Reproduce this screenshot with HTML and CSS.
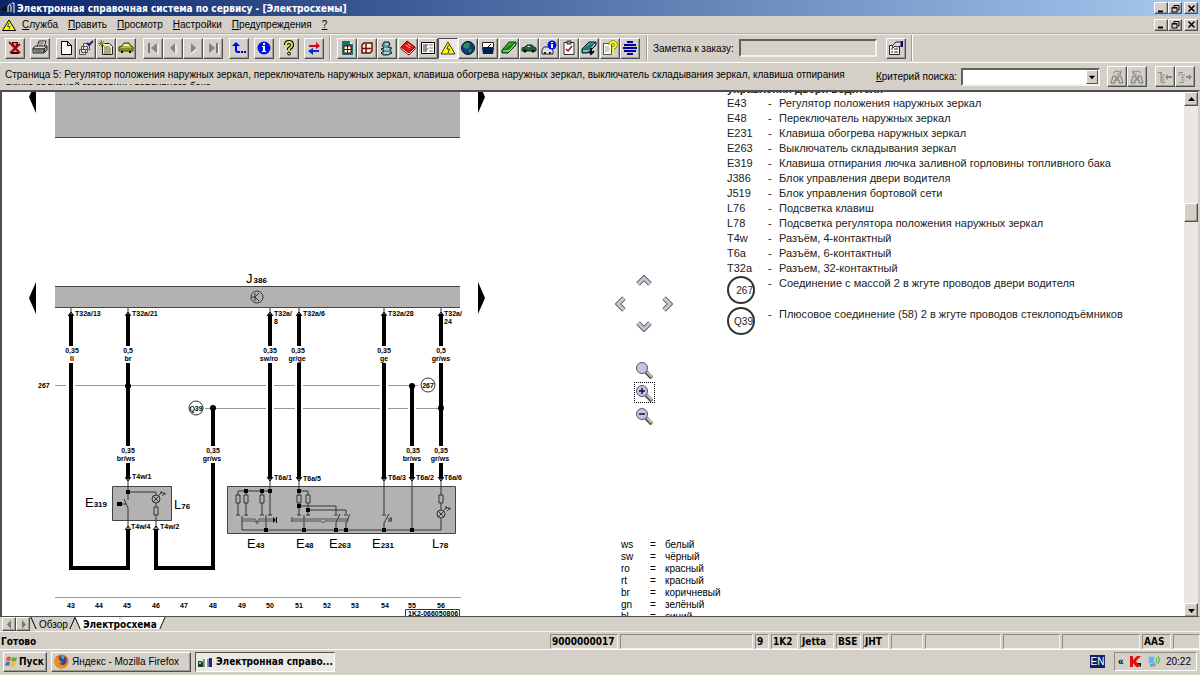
FILE: index.html
```html
<!DOCTYPE html>
<html lang="ru">
<head>
    <meta charset="UTF-8">
    <meta name="viewport" content="width=device-width, initial-scale=1.0">
    <title>Электронная справочная система по сервису - [Электросхемы]</title>
    <link rel="stylesheet" href="styles.css">
</head>
<body>
    <header class="titlebar">
        <svg class="app-icon" width="14" height="12" viewBox="0 0 14 12"><path d="M0 7l3-3h3v5H0z" fill="#111"/><path d="M6 10V4q2-3 3 0v6M10 1h2v10" fill="none" stroke="#fff"/><path d="M7 2h3" stroke="#7ab"/></svg>
        <h1>Электронная справочная система по сервису - [Электросхемы]</h1>
        <div class="win-buttons">
            <button aria-label="Свернуть"><svg width="9" height="9" viewBox="0 0 9 9"><path d="M1 7.500h5" stroke="#000" stroke-width="2"/></svg></button>
            <button aria-label="Восстановить"><svg width="9" height="9" viewBox="0 0 9 9"><path d="M3 3V1.500h5V6H6.500M1 3.500h5V8H1zM1 4h5M3 1.500h5" fill="none" stroke="#000"/></svg></button>
            <button class="win-close" aria-label="Закрыть"><svg width="9" height="9" viewBox="0 0 9 9"><path d="M1.500 1.500l6 6M7.500 1.500l-6 6" stroke="#000" stroke-width="1.500"/></svg></button>
        </div>
    </header>

    <nav class="menubar">
        <svg class="app-icon" width="14" height="12" viewBox="0 0 14 12"><path d="M7 1l6.500 10.500H.5z" fill="#ff0" stroke="#000"/><path d="M7 4L5.500 7.500h2.500L7 10.500" fill="none" stroke="#443"/></svg>
        <button><u>С</u>лужба</button>
        <button><u>П</u>равить</button>
        <button><u>П</u>росмотр</button>
        <button><u>Н</u>астройки</button>
        <button><u>П</u>редупреждения</button>
        <button><u>?</u></button>
        <div class="win-buttons">
            <button aria-label="Свернуть окно"><svg width="9" height="9" viewBox="0 0 9 9"><path d="M1 7.500h5" stroke="#000" stroke-width="2"/></svg></button>
            <button aria-label="Восстановить окно"><svg width="9" height="9" viewBox="0 0 9 9"><path d="M3 3V1.500h5V6H6.500M1 3.500h5V8H1zM1 4h5M3 1.500h5" fill="none" stroke="#000"/></svg></button>
            <button class="win-close" aria-label="Закрыть окно"><svg width="9" height="9" viewBox="0 0 9 9"><path d="M1.500 1.500l6 6M7.500 1.500l-6 6" stroke="#000" stroke-width="1.500"/></svg></button>
        </div>
    </nav>

    <div class="toolbar">
        <button class="tool" aria-label="Выход"><svg viewBox="0 0 16 16"><path d="M5 2h6v3L9 8l3 3v3H4v-3l3-3-2-3z" fill="#400"/><path d="M6 3h4l-2 4zM6 12l2-3 3 3z" fill="#d88"/><path d="M2 2l11 11M13 4L3 13" stroke="#b00010" stroke-width="2"/></svg></button>
        <button class="tool" aria-label="Печать"><svg viewBox="0 0 16 16"><path d="M5 7l2-6h7l-2 6" fill="#fff" stroke="#222"/><path d="M1 8l3-2h11l-3 3H1z" fill="#ddd" stroke="#222"/><path d="M1 9h11v4H1zM12 13l3-3V6l-3 3z" fill="#aaa" stroke="#222"/><path d="M3 11h7M7 3h5M7 5h4" stroke="#444" fill="none"/></svg></button>
        <div class="tool-group">
            <button class="tool" aria-label="Новый"><svg viewBox="0 0 16 16"><path d="M3.500 1.500h6l4 4v9h-10zM9.500 1.500v4h4" fill="#fff" stroke="#000"/></svg></button>
            <button class="tool" aria-label="Список заказов"><svg viewBox="0 0 16 16"><path d="M5.500 3.500h6v6h-6zM3.500 6.500h6v6h-6zM1.500 9.500h6v5h-6z" fill="#ddd" stroke="#555"/><path d="M9 3l2 2 4-4" fill="none" stroke="#228" stroke-width="2"/></svg></button>
            <button class="tool" aria-label="Новый заказ"><svg viewBox="0 0 16 16"><path d="M4.500 3.500h7l3 3v8h-10z" fill="#f4f0c8" stroke="#222"/><path d="M6 7h6M6 9h7M6 11h7M6 13h7" stroke="#663"/><path d="M1 1l5 5M6 1L1 6M3.500 0v7M0 3.500h7" stroke="#880"/></svg></button>
            <button class="tool" aria-label="Автомобиль"><svg viewBox="0 0 16 16"><path d="M1 7l3-1 2-3h5l2 3 2 1v4H1z" fill="#bdbd20" stroke="#331"/><path d="M5 6l1-2h4l2 2z" fill="#eee"/><path d="M3 12h2M11 12h2" stroke="#000" stroke-width="2"/><path d="M2 9h12" stroke="#552"/></svg></button>
        </div>
        <div class="tool-group">
            <button class="tool" aria-label="В начало"><svg viewBox="0 0 16 16"><path d="M4 3v10" stroke="#777" stroke-width="2"/><path d="M12 3v10L6 8z" fill="#858585"/><path d="M13 4v10" stroke="#fff"/></svg></button>
            <button class="tool" aria-label="Назад"><svg viewBox="0 0 16 16"><path d="M10 3v10L5 8z" fill="#858585"/><path d="M11 4v10" stroke="#fff"/></svg></button>
            <button class="tool" aria-label="Вперёд"><svg viewBox="0 0 16 16"><path d="M6 14l6-5" stroke="#fff"/><path d="M6 3v10l5-5z" fill="#858585"/></svg></button>
            <button class="tool" aria-label="В конец"><svg viewBox="0 0 16 16"><path d="M4 3v10l6-5z" fill="#858585"/><path d="M12 3v10" stroke="#777" stroke-width="2"/><path d="M13.500 4v10" stroke="#fff"/></svg></button>
        </div>
        <button class="tool" aria-label="На уровень выше"><svg viewBox="0 0 16 16"><path d="M5 5v5q0 2 2 2h2" fill="none" stroke="#00f" stroke-width="2"/><path d="M1 6l4-4 4 4z" fill="#00f"/><path d="M10 11h2v2h-2zM13 11h2v2h-2z" fill="#00a"/></svg></button>
        <button class="tool" aria-label="Информация"><svg viewBox="0 0 16 16"><circle cx="8" cy="8" r="6.500" fill="#0010e8"/><path d="M7 3h2v2H7zM6 6h3v5h1v1H6v-1h1V7H6z" fill="#fff"/></svg></button>
        <button class="tool" aria-label="Справка"><svg viewBox="0 0 16 16"><path d="M5 5q0-3 3-3t3 3q0 2-3 4v1" fill="none" stroke="#000" stroke-width="4"/><path d="M5 5q0-3 3-3t3 3q0 2-3 4v1" fill="none" stroke="#e8e030" stroke-width="2"/><circle cx="8" cy="13.500" r="1.500" fill="#dd2" stroke="#000"/></svg></button>
        <button class="tool" aria-label="Переключить"><svg viewBox="0 0 16 16"><path d="M3 5h7V2l4 4-4 3V7H3z" fill="#e00020"/><path d="M13 10H7V8l-5 3 5 4v-3h6z" fill="#0030d0"/></svg></button>
        <span class="divider"></span>
        <div class="tool-group tool-group-wide">
            <button class="tool" aria-label="Каталог"><svg viewBox="0 0 16 16"><path d="M3 1h8l3 3v11H3z" fill="#157070"/><path d="M11 1v3h3" fill="#fff"/><path d="M5 6h7v7H5z" fill="#ffd" stroke="#600"/><path d="M8.500 6v7M5 9.500h7" stroke="#600"/></svg></button>
            <button class="tool" aria-label="Нормы времени"><svg viewBox="0 0 16 16"><path d="M3 5l2-2h8v8l-2 2H3z" fill="#fff0c8" stroke="#611" stroke-width="1.500"/><path d="M7 4v9M3 8.500h9" fill="none" stroke="#611" stroke-width="1.500"/></svg></button>
            <button class="tool" aria-label="Ремонт"><svg viewBox="0 0 16 16"><path d="M5 2h5l1 3-2 2 4 1-2 2 2 3-4 2H4l-2-2 3-2-3-2 3-1-2-2z" fill="#5a9c98" stroke="#123"/><path d="M6 4h3M5 9h5M5 13h5" stroke="#fff"/></svg></button>
            <button class="tool" aria-label="Руководство"><svg viewBox="0 0 16 16"><path d="M1 7l6-6 8 6-6 6z" fill="#e01818" stroke="#700"/><path d="M1 7v2l8 6 6-6V7l-6 6z" fill="#fff" stroke="#900"/><path d="M6 5l4 3M8 4l3 2" stroke="#fbb"/></svg></button>
            <button class="tool" aria-label="Таблица"><svg viewBox="0 0 16 16"><path d="M1.500 2.500h13v11h-13z" fill="#fff" stroke="#000"/><path d="M3 5h5M3 7h4M3 9h5M3 11h4" stroke="#225"/><path d="M9 5h4M9 8h4M9 11h4" stroke="#775"/></svg></button>
            <button class="tool pressed" aria-label="Электросхемы"><svg viewBox="0 0 16 16"><path d="M8 2l7 12H1z" fill="#ff0" stroke="#333"/><path d="M8.500 5L7 9h2.500L8 13" fill="none" stroke="#332"/></svg></button>
            <button class="tool" aria-label="Глобус"><svg viewBox="0 0 16 16"><circle cx="8" cy="8" r="6.500" fill="#123c80" stroke="#012"/><path d="M4 4q4-3 6 0l-1 4-3 1-3-2zM8 10l4-1-2 4z" fill="#299058"/></svg></button>
            <button class="tool" aria-label="Измерения"><svg viewBox="0 0 16 16"><path d="M2.500 2.500h11v5h-11z" fill="#fff" stroke="#222"/><path d="M2 8h12l-1 6H3z" fill="#002058"/><path d="M7 8l4-4" stroke="#000"/></svg></button>
            <button class="tool" aria-label="Зелёная книга"><svg viewBox="0 0 16 16"><path d="M1 10L8 2h7l-7 8z" fill="#35a835" stroke="#040"/><path d="M1 10v3h6l8-8V2" fill="#168016" stroke="#040"/><path d="M2 11h6l6-7" fill="none" stroke="#cfc"/></svg></button>
            <button class="tool" aria-label="Кузов"><svg viewBox="0 0 16 16"><path d="M1 8l3-1 2-2h5l2 2 2 1v3H1z" fill="#276038" stroke="#132"/><path d="M6 7l1-1h2v1z" fill="#dfe"/><circle cx="4" cy="11" r="1.500"/><circle cx="12" cy="11" r="1.500"/></svg></button>
            <button class="tool" aria-label="Данные автомобиля"><svg viewBox="0 0 16 16"><path d="M1 10l2-3h6l3 3v4H1z" fill="#ddd" stroke="#224"/><path d="M3 14v-2h2v2M8 14v-2h2v2" fill="#223"/><circle cx="11" cy="5" r="4.500" fill="#0010e8"/><path d="M10 2h2v1h-2zM10 4h2v4h-2z" fill="#fff"/></svg></button>
            <button class="tool" aria-label="Проверка"><svg viewBox="0 0 16 16"><path d="M3 2.500h10v12H3z" fill="#fff" stroke="#333"/><path d="M6 1h4v3H6z" fill="#999" stroke="#333"/><path d="M5 9l2 2 4-5" fill="none" stroke="#911" stroke-width="1.500"/></svg></button>
            <button class="tool" aria-label="Литература"><svg viewBox="0 0 16 16"><path d="M1 9l7-7h7l-7 7z" fill="#48958c" stroke="#022"/><path d="M1 9v4h6l8-8V2" fill="#26706c" stroke="#022"/><path d="M2 11h6l6-7" fill="none" stroke="#dff"/><path d="M10 8v5M8 11l2 3 3-3" stroke="#012" fill="none" stroke-width="2"/></svg></button>
            <button class="tool" aria-label="Вопросы"><svg viewBox="0 0 16 16"><path d="M1.500 3.500h8v11h-8z" fill="#fff" stroke="#553"/><path d="M3 7h4M3 9h5M3 11h4" stroke="#aa7"/><path d="M8 5q0-3 3-3t3 3q0 2-3 3v2" fill="none" stroke="#550" stroke-width="3"/><path d="M8 5q0-3 3-3t3 3q0 2-3 3v2M11 12v2" fill="none" stroke="#ff0" stroke-width="2"/></svg></button>
            <button class="tool" aria-label="Сеть"><svg viewBox="0 0 16 16"><path d="M5 2h6M2 5h12M1 8h14M2 11h12M5 14h6" stroke="#0000a8" stroke-width="2"/></svg></button>
        </div>
        <span class="divider"></span>
        <label for="order-note">Заметка к заказу:</label>
        <input id="order-note" class="note" type="text">
        <button class="tool" aria-label="Свойства"><svg viewBox="0 0 16 16"><path d="M1.500 5.500h10v9h-10z" fill="#fff" stroke="#222"/><path d="M3 9h2M6 9h4M3 12h2M6 12h4" stroke="#222"/><path d="M4 6l4-4h5v4L9 7 7 6 5 8z" fill="#ddd" stroke="#222"/><path d="M13 1h2v6h-2z" fill="#009"/></svg></button>
        <span class="divider"></span>
    </div>

    <div class="pagebar">
        <p class="page-title">Страница 5: Регулятор положения наружных зеркал, переключатель наружных зеркал, клавиша обогрева наружных зеркал, выключатель складывания зеркал, клавиша отпирания<br>лючка заливной горловины топливного бака</p>
        <label for="criteria"><u>К</u>ритерий поиска:</label>
        <div class="combo">
            <select id="criteria"><option></option></select>
            <svg class="combo-arrow" viewBox="0 0 11 13"><path d="M2 5h7L5.500 9z"/></svg>
        </div>
        <div class="tool-group">
            <button class="tool" disabled aria-label="Найти далее"><svg viewBox="0 0 16 16"><path d="M4 7h3v3h2V7h3l2 7h-4v-3H6v3H2z" fill="#ccc" stroke="#777"/><path d="M4 4q4-4 8 0M12 1v4H8" fill="none" stroke="#888"/></svg></button>
            <button class="tool" disabled aria-label="Найти ранее"><svg viewBox="0 0 16 16"><path d="M4 7h3v3h2V7h3l2 7h-4v-3H6v3H2z" fill="#ccc" stroke="#777"/><path d="M12 4q-4-4-8 0M4 1v4h4" fill="none" stroke="#888"/></svg></button>
        </div>
        <div class="tool-group">
            <button class="tool" disabled aria-label="Добавить"><svg viewBox="0 0 16 16"><path d="M1 3.500h4M4 6h4M4 8.500h3M4 11h4M4 13.500h4M4 4v9" stroke="#888"/><path d="M8 8l3-3v2h4v2h-4v2z" fill="#888"/></svg></button>
            <button class="tool" disabled aria-label="Вставить"><svg viewBox="0 0 16 16"><path d="M2 3.500h4M4 6h4M4 8.500h3M4 11h4M2 13.500h5M2 4v3" stroke="#888"/><path d="M15 8l-3-3v2H9v2h3v2z" fill="#888"/></svg></button>
        </div>
    </div>

    <main class="content">
        <svg class="diagram" width="500" height="525" viewBox="0 92 500 525">
            <defs>
                <symbol id="lamp" viewBox="0 0 14 14" overflow="visible">
                    <circle cx="5" cy="9" r="4"/>
                    <path d="M2 6l6 6M8 6l-6 6M8 5l3-3M11 6l3-3M9 2l2 0v2M12 3h2v2"/>
                </symbol>
            </defs>

            <!-- module J386 and the block above it -->
            <g class="block">
                <path d="M55 90h405v47H55zM55 286h405v22H55z"/>
                <path class="edge" d="M55 137.500h405M55 286.500h405M55 307.500h405"/>
                <path class="box" d="M112.500 486.500h59v34h-59zM227.500 486.500h228v47h-228z"/>
            </g>
            <path d="M36 81v32l-7-16zM478 81v32l7-16zM36 282v32l-7-16zM478 282v32l7-16z"/>
            <g class="thin">
                <circle cx="257" cy="297" r="6"/>
                <path d="M255 293v8M255 297l4-4M255 297l4 4M252 297h3"/>
            </g>

            <!-- bus lines -->
            <path class="bus" d="M55 385.500h11M75 385.500h191M274 385.500h21M303 385.500h77M388 385.500h30M205 408.500h61M274 408.500h21M303 408.500h77M388 408.500h20M416 408.500h25M55 597.500h406"/>

            <!-- wires -->
            <path class="wire" d="M71 314v32M71 363v205h57v-39M128 314v32M128 363v83M128 463v16M213 408v38M213 463v105h-57v-39M270 314v32M270 363v116M299 314v32M299 363v116M384 314v32M384 363v116M412 386v60M412 463v16M441 314v32M441 363v83M441 463v16"/>
            <path class="thin" d="M71 308v6M128 308v6M270 308v6M299 308v6M384 308v6M441 308v6M128 478v8M270 478v8M299 478v8M384 478v8M412 478v8M441 478v8M128 521v9M156 521v9"/>
            <path class="pins" d="M68 316l3-4 3 4M125 316l3-4 3 4M267 316l3-4 3 4M296 316l3-4 3 4M381 316l3-4 3 4M438 316l3-4 3 4M125 477l3 4 3-4M267 477l3 4 3-4M296 477l3 4 3-4M381 477l3 4 3-4M409 477l3 4 3-4M438 477l3 4 3-4M125 530l3-4 3 4M153 530l3-4 3 4"/>
            <g class="dots">
                <circle cx="128" cy="386" r="3"/><circle cx="213" cy="408" r="3"/><circle cx="412" cy="386" r="3"/><circle cx="441" cy="408" r="3"/>
            </g>
            <g class="ring">
                <circle cx="196" cy="408" r="7"/><circle cx="428" cy="385" r="7"/>
            </g>

            <!-- E319 / L76 -->
            <path class="thin" d="M128 486v14M128 492h28v3M124 499l4 9v13M118 504h8M156 503v4M154 507h4v8h-4zM156 515v6"/>
            <path d="M126 490h4v4h-4zM117 502h5v4h-5z"/>
            <use class="thin" href="#lamp" x="151" y="490" width="14" height="14"/>

            <!-- E43 -->
            <path class="thin" d="M238 495v-4h32M246 491v4M262 491v4M270 486v29M236 495h4v8h-4zM244 495h4v8h-4zM260 495h4v8h-4zM238 503v12M246 503v12M262 503v12M236 515h4M244 515h4M260 515h4M268 515h4M242 516v14h199M266 515v15"/>
            <path class="slide" d="M242 519h13l2 3 2-3h14M242 521h13l2 3 2-3h14"/>
            <path d="M244 489h4v4h-4zM260 489h4v4h-4zM268 489h4v4h-4zM273 517l3 3v-3h1v6h-1v-3l-3 3z"/>

            <!-- E48 / E263 -->
            <path class="thin" d="M299 486v9M299 491h9v4M297 495h4v8h-4zM306 495h4v8h-4zM299 503v12M308 503v12M299 506h37v8M308 510h38v4M297 515h4M306 515h4M334 515h4M344 515h4M304 515v15M340 514l-4 9v7M350 514l-4 9v7M292 517v5"/>
            <path class="slide" d="M292 519h57M292 521h29l2 2 2-2h24"/>

            <!-- E231, L78 -->
            <path class="thin" d="M384 486v28M382 515h4M389 514l-5 9v7M388 519h4M388 521h4M391 517v4M412 486v44M441 486v9M439 495h4v8h-4zM441 503v7M441 518v12"/>
            <use class="thin" href="#lamp" x="436" y="505" width="14" height="14"/>
            <path d="M297 489h4v4h-4zM297 504h4v4h-4zM306 508h4v4h-4zM264 528h4v4h-4zM302 528h4v4h-4zM334 528h4v4h-4zM344 528h4v4h-4zM382 528h4v4h-4zM410 528h4v4h-4z"/>

            <g class="pin-text">
                <text x="75" y="316">T32a/13</text><text x="132" y="316">T32a/21</text>
                <text x="274" y="316">T32a/</text><text x="274" y="324">8</text>
                <text x="303" y="316">T32a/6</text><text x="388" y="316">T32a/28</text>
                <text x="444" y="316">T32a/</text><text x="444" y="324">24</text>
                <text x="132" y="479">T4w/1</text><text x="131" y="529">T4w/4</text><text x="160" y="529">T4w/2</text>
                <text x="274" y="480">T6a/1</text><text x="303" y="481">T6a/5</text><text x="388" y="480">T6a/3</text>
                <text x="416" y="480">T6a/2</text><text x="444" y="480">T6a/6</text>
                <text x="38" y="388">267</text>
            </g>
            <g class="pin-text mid">
                <text x="72" y="353">0,35</text><text x="72" y="361">li</text>
                <text x="128" y="353">0,5</text><text x="128" y="361">br</text>
                <text x="270" y="353">0,35</text><text x="269" y="361">sw/ro</text>
                <text x="298" y="353">0,35</text><text x="297" y="361">gr/ge</text>
                <text x="384" y="353">0,35</text><text x="384" y="361">ge</text>
                <text x="441" y="353">0,5</text><text x="441" y="361">gr/ws</text>
                <text x="128" y="453">0,35</text><text x="126" y="461">br/ws</text>
                <text x="213" y="453">0,35</text><text x="212" y="461">gr/ws</text>
                <text x="413" y="453">0,35</text><text x="412" y="461">br/ws</text>
                <text x="441" y="453">0,35</text><text x="440" y="461">gr/ws</text>
                <text x="196" y="411">Q39</text><text x="428" y="388">267</text>
                <text x="71" y="608">43</text><text x="99" y="608">44</text><text x="127" y="608">45</text><text x="156" y="608">46</text>
                <text x="184" y="608">47</text><text x="213" y="608">48</text><text x="242" y="608">49</text><text x="270" y="608">50</text>
                <text x="299" y="608">51</text><text x="327" y="608">52</text><text x="355" y="608">53</text><text x="385" y="608">54</text>
                <text x="412" y="608">55</text><text x="441" y="608">56</text>
            </g>
            <g class="part-text">
                <text x="246" y="283">J<tspan dx="1">386</tspan></text>
                <text x="85" y="507">E<tspan>319</tspan></text>
                <text x="174" y="509">L<tspan>76</tspan></text>
                <text x="247" y="548">E<tspan>43</tspan></text>
                <text x="296" y="548">E<tspan>48</tspan></text>
                <text x="329" y="548">E<tspan>263</tspan></text>
                <text x="372" y="548">E<tspan>231</tspan></text>
                <text x="432" y="548">L<tspan>78</tspan></text>
            </g>
            <path class="stamp" d="M405.500 618v-8.500h54v8.500"/>
            <text class="stamp-text" x="408" y="616">1K2-066050806</text>
        </svg>

        <div class="side">
            <div class="pan">
                <button class="pan-up" aria-label="Вверх"><svg width="16" height="12" viewBox="0 0 16 12"><path d="M2 9l6-6 6 6"/><path class="shine" d="M2 9l6-6 6 6"/></svg></button>
                <button class="pan-left" aria-label="Влево"><svg width="12" height="16" viewBox="0 0 12 16"><path d="M9 2L3 8l6 6"/><path class="shine" d="M9 2L3 8l6 6"/></svg></button>
                <button class="pan-right" aria-label="Вправо"><svg width="12" height="16" viewBox="0 0 12 16"><path d="M3 2l6 6-6 6"/><path class="shine" d="M3 2l6 6-6 6"/></svg></button>
                <button class="pan-down" aria-label="Вниз"><svg width="16" height="12" viewBox="0 0 16 12"><path d="M2 3l6 6 6-6"/><path class="shine" d="M2 3l6 6 6-6"/></svg></button>
            </div>
            <div class="zoom">
                <button aria-label="Исходный масштаб"><svg width="18" height="18" viewBox="0 0 18 18"><path d="M11 11l6 6" stroke="#555" stroke-width="4"/><path d="M12 11l5 5" stroke="#c8c4b0" stroke-width="2"/><circle cx="7" cy="7" r="5.500" fill="#c4c4e8" stroke="#556"/></svg></button>
                <button class="focused" aria-label="Увеличить"><svg width="18" height="18" viewBox="0 0 18 18"><path d="M11 11l6 6" stroke="#555" stroke-width="4"/><path d="M12 11l5 5" stroke="#c8c4b0" stroke-width="2"/><circle cx="7" cy="7" r="5.500" fill="#c4c4e8" stroke="#556"/><path d="M4 7h6M7 4v6" stroke="#113" stroke-width="1.500"/></svg></button>
                <button aria-label="Уменьшить"><svg width="18" height="18" viewBox="0 0 18 18"><path d="M11 11l6 6" stroke="#555" stroke-width="4"/><path d="M12 11l5 5" stroke="#c8c4b0" stroke-width="2"/><circle cx="7" cy="7" r="5.500" fill="#c4c4e8" stroke="#556"/><path d="M4 7h6" stroke="#113" stroke-width="1.500"/></svg></button>
            </div>
            <table class="colors">
                <tr><td>ws</td><td>=</td><td>белый</td></tr>
                <tr><td>sw</td><td>=</td><td>чёрный</td></tr>
                <tr><td>ro</td><td>=</td><td>красный</td></tr>
                <tr><td>rt</td><td>=</td><td>красный</td></tr>
                <tr><td>br</td><td>=</td><td>коричневый</td></tr>
                <tr><td>gn</td><td>=</td><td>зелёный</td></tr>
                <tr><td>bl</td><td>=</td><td>синий</td></tr>
            </table>
        </div>

        <section class="legend">
            <h2>управления двери водителя</h2>
            <table>
                <tr><td>E43</td><td>-</td><td>Регулятор положения наружных зеркал</td></tr>
                <tr><td>E48</td><td>-</td><td>Переключатель наружных зеркал</td></tr>
                <tr><td>E231</td><td>-</td><td>Клавиша обогрева наружных зеркал</td></tr>
                <tr><td>E263</td><td>-</td><td>Выключатель складывания зеркал</td></tr>
                <tr><td>E319</td><td>-</td><td>Клавиша отпирания лючка заливной горловины топливного бака</td></tr>
                <tr><td>J386</td><td>-</td><td>Блок управления двери водителя</td></tr>
                <tr><td>J519</td><td>-</td><td>Блок управления бортовой сети</td></tr>
                <tr><td>L76</td><td>-</td><td>Подсветка клавиш</td></tr>
                <tr><td>L78</td><td>-</td><td>Подсветка регулятора положения наружных зеркал</td></tr>
                <tr><td>T4w</td><td>-</td><td>Разъём, 4-контактный</td></tr>
                <tr><td>T6a</td><td>-</td><td>Разъём, 6-контактный</td></tr>
                <tr><td>T32a</td><td>-</td><td>Разъем, 32-контактный</td></tr>
                <tr class="tall"><td><span class="node">267</span></td><td>-</td><td>Соединение с массой 2 в жгуте проводов двери водителя</td></tr>
                <tr class="tall"><td><span class="node">Q39</span></td><td>-</td><td>Плюсовое соединение (58) 2 в жгуте проводов стеклоподъёмников</td></tr>
            </table>
        </section>

        <div class="scrollbar">
            <button aria-label="Прокрутить вверх"><svg width="9" height="9" viewBox="0 0 9 9"><path d="M1 6h7L4.500 2z"/></svg></button>
            <div class="track-before"></div>
            <div class="thumb"></div>
            <div class="track-after"></div>
            <button aria-label="Прокрутить вниз"><svg width="9" height="9" viewBox="0 0 9 9"><path d="M1 3h7L4.500 7z"/></svg></button>
        </div>
    </main>

    <div class="tabs">
        <button class="tab-arrow" aria-label="Предыдущая вкладка"><svg width="7" height="9" viewBox="0 0 7 9"><path d="M5 0v9L1 4.500z"/></svg></button>
        <button class="tab-arrow" aria-label="Следующая вкладка"><svg width="7" height="9" viewBox="0 0 7 9"><path d="M2 0v9l4-4.500z"/></svg></button>
        <button class="tab">Обзор</button>
        <button class="tab active">Электросхема</button>
    </div>

    <footer class="statusbar">
        <span class="state">Готово</span>
        <span>9000000017</span>
        <span></span>
        <span>9</span>
        <span>1K2</span>
        <span>Jetta</span>
        <span>BSE</span>
        <span>JHT</span>
        <span></span>
        <span></span>
        <span></span>
        <span></span>
        <span>AAS</span>
        <span></span>
    </footer>

    <div class="taskbar">
        <button class="start"><svg width="13" height="13" viewBox="0 0 13 13"><path d="M2 2q2-1 4 0L5 6Q3 5 1 6z" fill="#e8502c"/><path d="M7 2q3 1 5 0l-1 4q-2 1-5 0z" fill="#62b030"/><path d="M1 7q2-1 4 0l-1 4Q2 10 0 11z" fill="#3878d8"/><path d="M6 7q3 1 5 0l-1 4q-2 1-5 0z" fill="#f4c020"/></svg>Пуск</button>
        <button class="task"><svg width="15" height="15" viewBox="0 0 15 15"><circle cx="7.500" cy="7.500" r="7" fill="#e66010"/><circle cx="8" cy="6.500" r="4.500" fill="#24509c"/><path d="M1 3q2 1 4 0-1 2 1 4l2 1q-1 2-3 1 2 3 6 2 3-2 2-7 2 3 1 6-2 4-6 4.500Q1 14 .500 8z" fill="#f08c18"/><path d="M6 3l4-1v3z" fill="#78a8dc"/></svg>Яндекс - Mozilla Firefox</button>
        <button class="task running"><svg width="15" height="12" viewBox="0 0 15 12"><path d="M0 5h3l2 1v5H0z" fill="#142"/><path d="M1 6h2v2H1z" fill="#9c9"/><path d="M7 11V4q1-3 2 0v7" fill="none" stroke="#fff" stroke-width="2"/><path d="M6 3v8M10 3v8" stroke="#222"/><path d="M11 2h3v9h-3z" fill="#22a"/></svg>Электронная справо...</button>
        <span class="lang">EN</span>
        <div class="tray">
            <span class="more">«</span>
            <svg width="13" height="13" viewBox="0 0 13 13"><path d="M1 1h3v4l4-4h4L7 6l4 6H7L4 8v4H1z" fill="#e01010"/><path d="M8 8l4 4V8z" fill="#111"/></svg>
            <svg width="14" height="13" viewBox="0 0 14 13"><path d="M1 2l6-1 1 7-6 1z" fill="#58b8f0" stroke="#bcd"/><path d="M3 9l5-1 1 3-6 1z" fill="#8898a8"/><path d="M9 3q2 2 0 5M11 1q3 4 0 8" fill="none" stroke="#40b020"/></svg>
            <time>20:22</time>
        </div>
    </div>
</body>
</html>
```
FILE: styles.css
```css
* {
    box-sizing: border-box;
}
body {
    margin: 0;
    height: 100vh;
    display: flex;
    flex-direction: column;
    overflow: hidden;
    background: #d4d0c8;
    color: #000;
    font-family: "Liberation Sans", Arial, sans-serif;
    font-size: 10px;
    line-height: 13px;
}
button {
    font: inherit;
    color: inherit;
    margin: 0;
    padding: 0;
    border: 0;
    background: none;
    white-space: nowrap;
}
svg {
    flex: none;
    display: block;
}
/* Bold interface text */
.titlebar h1,
.tab.active,
.statusbar,
.start,
.task.running {
    font-family: "DejaVu Sans Condensed", "DejaVu Sans", sans-serif;
    font-size: 10px;
    font-weight: bold;
}
/* Title bar and menu */
.titlebar,
.menubar {
    flex: none;
    display: flex;
    align-items: center;
    padding: 0 2px;
}
.titlebar {
    height: 16px;
    background: linear-gradient(90deg, #0a246a, #a6caf0);
    color: #fff;
}
.titlebar h1 {
    margin: 0;
}
.app-icon {
    margin-right: 1px;
}
.menubar {
    height: 17px;
}
.menubar > button {
    padding: 0 5px;
}
.win-buttons {
    display: flex;
    margin-left: auto;
}
.win-buttons button,
.tool,
.scrollbar button,
.thumb,
.tab-arrow,
.start,
.task {
    background: #d4d0c8;
    border: 1px solid;
    border-color: #fff #505050 #505050 #fff;
    box-shadow: inset -1px -1px #a09c94;
}
.win-buttons button {
    width: 14px;
    height: 12px;
    display: flex;
    align-items: center;
    justify-content: center;
}
.win-buttons .win-close {
    margin-left: 2px;
}
/* Toolbar */
.toolbar {
    flex: none;
    height: 29px;
    display: flex;
    align-items: center;
    gap: 5px;
    padding: 0 5px;
    border-top: 1px solid #b0aca4;
    box-shadow: inset 0 1px #f0eeea;
}
.tool-group {
    display: flex;
}
.toolbar .tool-group {
    margin: 0 1px;
}
.tool-group-wide {
    width: 303px;
    justify-content: space-between;
}
.tool {
    flex: none;
    width: 20px;
    height: 21px;
    display: flex;
    align-items: center;
    justify-content: center;
}
.tool svg {
    width: 16px;
    height: 16px;
}
.tool.pressed {
    background: #ece9e4;
    border-color: #505050 #fff #fff #505050;
    box-shadow: none;
}
.divider {
    width: 2px;
    height: 26px;
    border-left: 1px solid #a09c94;
    border-right: 1px solid #fff;
}
.toolbar label {
    min-width: 78px;
    white-space: nowrap;
}
.note {
    width: 138px;
    height: 18px;
    margin-right: 4px;
    background: #d4d0c8;
    border: 2px solid;
    border-color: #606060 #f4f2ee #f4f2ee #606060;
    font: inherit;
}
/* Page line with search */
.pagebar {
    flex: none;
    height: 28px;
    display: flex;
    align-items: center;
    padding: 0 5px;
    border-top: 1px solid #fff;
}
.page-title {
    flex: 1;
    height: 16px;
    margin: 0;
    overflow: hidden;
    white-space: nowrap;
    line-height: 12px;
}
.pagebar label {
    margin-right: 4px;
}
.combo {
    position: relative;
    width: 139px;
    margin-right: 7px;
}
.combo select {
    display: block;
    width: 100%;
    height: 18px;
    appearance: none;
    background: #fff;
    border: 2px solid;
    border-color: #606060 #f4f2ee #f4f2ee #606060;
    border-radius: 0;
    font: inherit;
}
.combo-arrow {
    position: absolute;
    top: 2px;
    right: 2px;
    width: 12px;
    height: 14px;
    background: #d4d0c8;
    border: 1px solid;
    border-color: #fff #505050 #505050 #fff;
    pointer-events: none;
}
.pagebar .tool-group + .tool-group {
    margin-left: 8px;
}
/* Content */
.content {
    flex: 1;
    min-height: 0;
    display: grid;
    grid-template-columns: minmax(500px, 608fr) 117px minmax(0, 457fr) 14px;
    background: #fff;
    border: 2px solid #505050;
    border-width: 2px 2px 1px;
    border-right-color: #d4d0c8;
    overflow: hidden;
}
.diagram {
    margin-left: -2px;
}
.block {
    fill: #b2b2b2;
}
.edge,
.box {
    stroke: #444;
}
.thin,
.pins,
.ring,
.stamp {
    fill: none;
    stroke: #333;
}
.pins {
    stroke: #000;
}
.bus {
    stroke: #999;
}
.slide {
    fill: none;
    stroke: #555;
}
.wire {
    fill: none;
    stroke: #000;
    stroke-width: 4px;
}
.pin-text,
.stamp-text {
    font-size: 7px;
    font-weight: bold;
}
.mid {
    text-anchor: middle;
}
.part-text {
    font-size: 13px;
}
.part-text tspan {
    font-size: 8px;
    font-weight: bold;
}
.side {
    display: flex;
    flex-direction: column;
    min-height: 0;
    padding: 183px 0 0 5px;
}
.pan {
    display: grid;
    grid-template-columns: 12px 34px 12px;
    justify-items: center;
    align-items: center;
    grid-template-areas: ". up ." "left . right" ". down .";
    grid-template-rows: 12px 33px 12px;
}
.pan-up { grid-area: up; }
.pan-left { grid-area: left; }
.pan-right { grid-area: right; }
.pan-down { grid-area: down; }
.pan path {
    fill: none;
    stroke: #666;
    stroke-width: 5px;
}
.pan .shine {
    stroke: #c6c6d8;
    stroke-width: 3px;
}
.zoom {
    width: 58px;
    display: flex;
    flex-direction: column;
    align-items: center;
    gap: 2px;
    margin-top: 27px;
}
.zoom button {
    width: 21px;
    height: 21px;
    display: flex;
    align-items: center;
    justify-content: center;
}
.zoom .focused {
    border: 1px dotted #000;
}
table {
    border-collapse: collapse;
}
td {
    padding: 0;
    vertical-align: top;
    white-space: nowrap;
}
.colors {
    margin: 113px 0 0 6px;
    width: 100px;
    line-height: 12px;
}
.colors td:first-child {
    width: 29px;
}
.colors td:nth-child(2) {
    width: 15px;
}
.legend {
    margin-top: -9px;
    font-size: 11px;
    line-height: 15px;
    color: #222;
}
.legend h2 {
    margin: 0;
    font-size: 11px;
    line-height: 13px;
}
.legend td:first-child {
    width: 41px;
}
.legend td:nth-child(2) {
    width: 11px;
}
.tall td {
    height: 31px;
}
.node {
    display: flex;
    align-items: center;
    justify-content: flex-end;
    width: 28px;
    height: 28px;
    border: 2px solid #333;
    border-radius: 50%;
    font-size: 10px;
}
.scrollbar {
    display: flex;
    flex-direction: column;
    background: #e9e7e3;
}
.scrollbar button {
    height: 14px;
    display: flex;
    align-items: center;
    justify-content: center;
}
.track-before {
    flex: 97;
}
.track-after {
    flex: 382;
}
.thumb {
    height: 19px;
}
/* Sheet tabs */
.tabs {
    flex: none;
    height: 15px;
    display: flex;
    padding-left: 2px;
    border-bottom: 1px solid #f4f2ee;
}
.tab-arrow {
    width: 14px;
    display: flex;
    align-items: center;
    justify-content: center;
}
.tab-arrow path {
    fill: #777;
}
.tab {
    position: relative;
    margin-left: 3px;
    padding: 0 6px;
}
.tab::before,
.tab::after {
    content: "";
    position: absolute;
    top: 0;
    bottom: 2px;
    width: 50%;
    z-index: -1;
}
.tab::before {
    left: 0;
    border-left: 1px solid #000;
    transform: skewX(24deg);
}
.tab::after {
    right: 0;
    border-right: 1px solid #000;
    transform: skewX(-24deg);
}
.tab.active::before,
.tab.active::after {
    background: #fff;
}
/* Status bar */
.statusbar {
    flex: none;
    height: 17px;
    display: grid;
    grid-template-columns: 1fr 68px 133px 14px 27px 34px 25px 26px 32px 76px 57px 78px 29px 27px;
    gap: 2px;
    padding: 2px 0 0;
}
.statusbar span {
    border: 1px solid;
    border-color: #908c84 #f4f2ee #f4f2ee #908c84;
    padding-left: 1px;
    line-height: 13px;
    white-space: nowrap;
}
.statusbar .state {
    border-color: transparent;
    padding: 0;
}
/* Taskbar */
.taskbar {
    flex: none;
    height: 26px;
    display: flex;
    align-items: center;
    padding: 0 3px 2px;
    border-top: 1px solid #fff;
}
.start,
.task {
    height: 20px;
    display: flex;
    align-items: center;
    gap: 3px;
    padding: 0 2px;
}
.start {
    width: 44px;
    gap: 1px;
    padding: 0 1px;
}
.task {
    width: 140px;
    margin-left: 4px;
}
.task.running {
    background: #ebe9e4;
    border-color: #505050 #fff #fff #505050;
    box-shadow: none;
}
.lang {
    margin-left: auto;
    width: 15px;
    background: #0a246a;
    color: #fff;
    text-align: center;
}
.tray {
    width: 83px;
    height: 19px;
    display: flex;
    align-items: center;
    justify-content: space-between;
    margin-left: 9px;
    padding: 0 5px 0 3px;
    border: 1px solid;
    border-color: #908c84 #fff #fff #908c84;
}
.more {
    font-weight: bold;
}
```
